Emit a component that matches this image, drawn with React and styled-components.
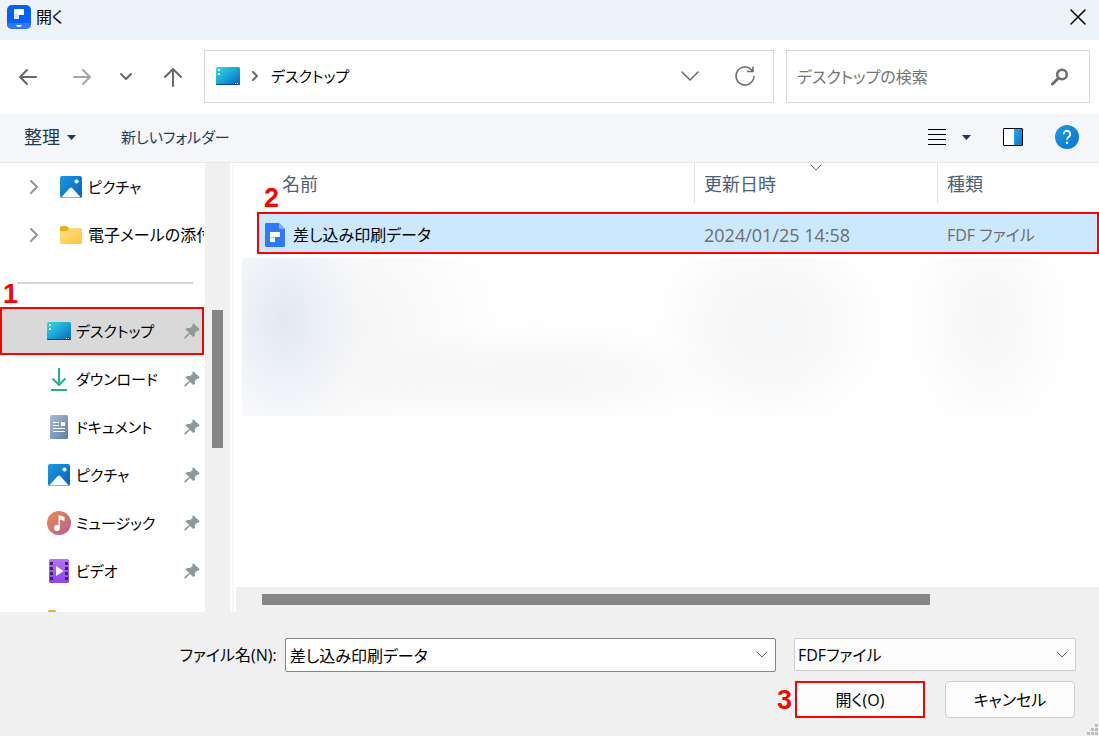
import React from "react";
import styled, { createGlobalStyle } from "styled-components";

const Global = createGlobalStyle`
  *, *::before, *::after { box-sizing: border-box; }
  body {
    margin: 0;
    font-family: "Open Sans", "Noto Sans CJK JP", sans-serif;
    font-feature-settings: "palt";
    font-size: 18px;
    line-height: 24px;
    color: #000;
    background: #f0f0f0;
  }
  button, input, select { font: inherit; font-feature-settings: inherit; color: inherit; }
  button { background: none; border: 0; padding: 0; cursor: pointer; }
  svg { display: block; flex: none; }
`;

const Dialog = styled.div`
  display: flex;
  flex-direction: column;
  height: 100vh;
  overflow: hidden;
`;

const TitleBar = styled.header`
  display: flex;
  align-items: center;
  gap: 5px;
  height: 40px;
  padding: 0 13px 6px 7px;
  background: #eef3f8;
`;

const Title = styled.h1`
  flex: 1;
  margin: 0;
  font-size: 16px;
  font-weight: 400;
`;

const IconButton = styled.button`
  display: flex;
  align-items: center;
  justify-content: center;
  flex: none;
  width: ${(p) => p.$w || 20}px;
  height: 24px;
`;

const NavBar = styled.div`
  display: flex;
  height: 74px;
  padding: 10px 9px 11px 0;
  background: #fff;
`;

const History = styled.nav`
  display: flex;
  align-items: center;
  width: 204px;
  flex: none;
`;

const Field = styled.div`
  display: flex;
  align-items: center;
  border: 1px solid #d9d9d9;
  background: #fff;
  min-width: 0;
`;

const Address = styled(Field)`
  flex: 1;
  margin-right: 12px;
  padding: 0 18px 2px 11px;
`;

const Crumb = styled.span`
  flex: 1;
  margin-left: 2px;
  font-size: 15px;
`;

const Search = styled(Field)`
  flex: 0 1 304px;
  padding: 0 20px 0 10px;
`;

const SearchInput = styled.input`
  flex: 1;
  min-width: 0;
  border: 0;
  padding: 0;
  outline: 0;
  font-size: 16px;
  background: none;
  &::placeholder { color: #757575; opacity: 1; }
`;

const Toolbar = styled.div`
  display: flex;
  align-items: center;
  gap: 45px;
  height: 49px;
  padding: 0 20px 2px 24px;
  background: #f4f6f9;
  border-bottom: 1px solid #e6e8ea;
  color: #1e395b;
`;

const ToolButton = styled.button`
  display: flex;
  align-items: center;
  gap: ${(p) => p.$gap || 7}px;
  font-size: ${(p) => p.$size || 18}px;
`;

const ToolGroup = styled.div`
  display: flex;
  align-items: center;
  gap: 32px;
  margin-left: auto;
`;

const Body = styled.div`
  display: flex;
  flex: 1;
  min-height: 0;
  background: #fff;
`;

const Tree = styled.nav`
  width: 205px;
  flex: none;
  overflow: hidden;
`;

const TreeList = styled.ul`
  list-style: none;
  margin: 0;
  padding: 0;
`;

const TreeItem = styled.li`
  position: relative;
  width: 204px;
`;

const TreeButton = styled.button`
  display: flex;
  align-items: center;
  width: 100%;
  height: 48px;
  padding: 0 ${(p) => (p.$nested ? 0 : 4)}px 0 ${(p) => (p.$nested ? 28 : 47)}px;
  text-align: left;
  ${(p) => p.$active && "background: #d9d9d9; box-shadow: inset 0 0 0 2px #f00;"}
`;

const TreeIcon = styled.span`
  display: flex;
  justify-content: center;
  flex: none;
  width: 24px;
  margin-left: ${(p) => (p.$nested ? 19 : 0)}px;
`;

const TreeLabel = styled.span`
  flex: 1;
  margin-left: 5px;
  font-size: ${(p) => p.$size || 15}px;
  white-space: nowrap;
  overflow: hidden;
`;

const Divider = styled.hr`
  width: 176px;
  height: 2px;
  margin: 23px 0 23px 17px;
  border: 0;
  background: #d6d6d6;
`;

const ScrollTrack = styled.div`
  flex: none;
  background: #f0f0f0;
  ${(p) => (p.$horizontal ? "height: 25px; margin-left: 2px; padding: 7px 169px 7px 26px;" : "width: 25px; padding: 147px 7px 0;")}
`;

const ScrollThumb = styled.div`
  background: #868686;
  height: ${(p) => p.$length || "100%"};
`;

const Splitter = styled.div`
  width: 4px;
  flex: none;
  border-right: 2px solid #f7f7f7;
`;

const Files = styled.main`
  display: flex;
  flex-direction: column;
  flex: 1;
  min-width: 0;
`;

const FileArea = styled.div`
  position: relative;
  flex: 1;
  min-height: 0;
  overflow: hidden;
`;

const Table = styled.table`
  display: block;
  margin-left: 23px;
  thead, tbody { display: block; }
`;

const HeadRow = styled.tr`
  display: grid;
  grid-template-columns: 437fr 243fr 162fr;
  height: 41px;
  margin-bottom: 8px;
`;

const HeadCell = styled.th`
  position: relative;
  padding: 9px 0 0 ${(p) => (p.$first ? 25 : 9)}px;
  border-left: ${(p) => (p.$first ? 0 : 1)}px solid #e0e3e6;
  font-weight: 400;
  text-align: left;
  color: #4c607a;
`;

const SortMark = styled.span`
  position: absolute;
  top: 1px;
  left: 50%;
  margin-left: -6px;
`;

const FileRow = styled.tr`
  position: relative;
  display: grid;
  grid-template-columns: 437fr 243fr 162fr;
  align-items: center;
  height: 42px;
  padding-top: 3px;
  background: #cce8ff;
  box-shadow: inset 0 0 0 2px #f00;
`;

const FileCell = styled.td`
  display: flex;
  align-items: center;
  gap: 8px;
  padding: 0 0 0 ${(p) => (p.$first ? 8 : 10)}px;
  font-size: ${(p) => p.$size || 16}px;
  color: ${(p) => (p.$first ? "#000" : "#6d6d6d")};
`;

const Redacted = styled.div`
  height: 158px;
  margin: 4px 28px 0 8px;
  background:
    radial-gradient(ellipse 75px 120px at 40px 58px, rgba(196, 211, 240, 0.35), rgba(215, 227, 248, 0.25) 50%, transparent),
    radial-gradient(ellipse 190px 150px at 60px 70px, rgba(225, 227, 230, 0.45), transparent),
    radial-gradient(ellipse 190px 50px at 290px 118px, rgba(236, 237, 238, 0.5), rgba(240, 241, 241, 0.4) 50%, transparent),
    radial-gradient(ellipse 110px 100px at 528px 68px, rgba(238, 239, 241, 0.55), rgba(241, 242, 242, 0.5) 50%, transparent),
    radial-gradient(ellipse 75px 110px at 746px 62px, rgba(238, 238, 240, 0.5), rgba(243, 244, 244, 0.45) 50%, transparent),
    #fefefe;
`;

const Footer = styled.form`
  position: relative;
  display: flex;
  flex-direction: column;
  gap: 9px;
  height: 124px;
  padding: 26px 23px 0 24px;
  background: #f0f0f0;
`;

const FooterRow = styled.div`
  display: flex;
  justify-content: flex-end;
  gap: ${(p) => p.$gap}px;
  padding-right: ${(p) => p.$inset || 0}px;
`;

const NameLabel = styled.label`
  flex: 1;
  text-align: right;
  font-size: 16px;
  line-height: 34px;
  margin-right: -10px;
  white-space: nowrap;
`;

const Combo = styled.div`
  position: relative;
  flex: none;
  width: ${(p) => p.$width};
  height: 34px;
`;

const NameInput = styled.input`
  width: 100%;
  height: 34px;
  padding: 0 32px 0 4px;
  border: 1px solid #868686;
  border-radius: 2px;
  background: #fff;
  font-size: 16px;
`;

const TypeSelect = styled.select`
  display: block;
  appearance: none;
  width: 100%;
  height: 33px;
  padding: 0 32px 0 3px;
  border: 1px solid #cfcfcf;
  border-radius: 2px;
  background: #fdfdfd;
  font-size: 16px;
`;

const ComboArrow = styled.span`
  position: absolute;
  right: 8px;
  top: 13px;
  pointer-events: none;
`;

const PushButton = styled.button`
  width: 130px;
  height: 37px;
  font-size: 16px;
  background: #fdfdfd;
  border: ${(p) => (p.$marked ? "2px solid #f00" : "1px solid #d0d0d0")};
  border-radius: ${(p) => (p.$marked ? 0 : 4)}px;
`;

const Marked = styled.div`
  position: relative;
  display: flex;
`;

const StepNumber = styled.span`
  position: absolute;
  left: ${(p) => p.$left}px;
  top: ${(p) => p.$top}px;
  z-index: 1;
  font: bold 27px/28px "Liberation Sans", Arial, sans-serif;
  color: #f00;
  text-shadow: 0 0 2px #fff, 1px 1px 1px #fff, -1px -1px 1px #fff, 2px 0 2px #fff, -2px 0 2px #fff, 0 2px 2px #fff;
`;

const Grip = styled.svg`
  position: absolute;
  right: 0;
  bottom: 0;
`;

const Stroke = ({ w, h, d, color = "#686868", sw = 2 }) => (
  <svg width={w} height={h} viewBox={`0 0 ${w} ${h}`} fill="none" stroke={color} strokeWidth={sw} aria-hidden="true">
    <path d={d} strokeLinecap="round" strokeLinejoin="round" />
  </svg>
);

const Caret = () => (
  <svg width="9" height="5" viewBox="0 0 9 5" aria-hidden="true"><path d="M0 0h9L4.500 5z" fill="#1e395b" /></svg>
);

const AppLogo = () => (
  <svg width="24" height="24" viewBox="0 0 24 24" aria-hidden="true">
    <rect width="24" height="24" rx="5" fill="#0560fd" />
    <path d="M0 18h24v1a5 5 0 0 1-5 5H5a5 5 0 0 1-5-5z" fill="#2b7bff" />
    <path d="M7 4h10v6h-5v4H7z" fill="#fff" />
    <path d="M7 9h5v5H7z" fill="#dbe8ff" />
    <path d="M9 20h6q-.5 2-3 2t-3-2z" fill="#fff" />
  </svg>
);

const DesktopIcon = () => (
  <svg width="24" height="18" viewBox="0 0 24 18" aria-hidden="true">
    <defs>
      <linearGradient id="desk" x1="0" y1="0" x2="1" y2="1">
        <stop offset="0" stopColor="#34dbe8" /><stop offset=".5" stopColor="#1ba4d6" /><stop offset="1" stopColor="#0b62bd" />
      </linearGradient>
    </defs>
    <rect width="24" height="18" rx="1.500" fill="url(#desk)" />
    <path d="M0 17h24a1 1 0 0 1-1 1H1a1 1 0 0 1-1-1z" fill="#0a4a86" />
    <path d="M2 2h2v2H2zM2 6h2v2H2zM19 16h1v1h-1zM21 16h1v1h-1z" fill="#fff" />
  </svg>
);

const PictureIcon = () => (
  <svg width="22" height="22" viewBox="0 0 22 22" aria-hidden="true">
    <defs>
      <linearGradient id="pic" x1="0" y1="0" x2="1" y2="1">
        <stop offset="0" stopColor="#1a9be6" /><stop offset="1" stopColor="#0660b4" />
      </linearGradient>
    </defs>
    <rect width="22" height="22" rx="2" fill="url(#pic)" />
    <path d="M1.500 21 9.800 12q1.200-1.200 2.400 0l8.300 9q-.5.500-1.500.5H3q-1 0-1.500-.5z" fill="#f4f9ff" />
    <circle cx="16.500" cy="5.500" r="2.100" fill="#fff" />
  </svg>
);

const FolderIcon = () => (
  <svg width="22" height="18" viewBox="0 0 22 18" aria-hidden="true">
    <defs>
      <linearGradient id="fold" x1="0" y1="0" x2="1" y2="1">
        <stop offset="0" stopColor="#ffdf86" /><stop offset="1" stopColor="#fcc63c" />
      </linearGradient>
    </defs>
    <path d="M0 1.500Q0 0 1.500 0H6q1 0 1.500.8L9 2.500h11.500Q22 2.500 22 4v4H0z" fill="#f1ae1c" />
    <path d="M0 5h7l2-2h11.500Q22 3 22 4.500v12q0 1.500-1.500 1.500h-19Q0 18 0 16.500z" fill="url(#fold)" />
  </svg>
);

const DownloadIcon = () => (
  <svg width="18" height="24" viewBox="0 0 18 24" fill="none" stroke="#22b193" strokeWidth="2" aria-hidden="true">
    <path d="M9 1v17M2.500 11.500 9 18l6.500-6.500M1 23h16" />
  </svg>
);

const DocumentIcon = () => (
  <svg width="18" height="24" viewBox="0 0 18 24" aria-hidden="true">
    <defs>
      <linearGradient id="doc" x1="0" y1="0" x2="1" y2="1">
        <stop offset="0" stopColor="#a9bfd6" /><stop offset="1" stopColor="#5b7da3" />
      </linearGradient>
    </defs>
    <rect width="18" height="24" rx="1.500" fill="url(#doc)" />
    <path d="M3 7.500h6M3 10.500h6M3 13.500h12M3 16.500h12" stroke="#fff" />
    <path d="M11 7h4v4h-4z" fill="#fff" />
  </svg>
);

const MusicIcon = () => (
  <svg width="24" height="24" viewBox="0 0 24 24" aria-hidden="true">
    <defs>
      <linearGradient id="mus" x1="0" y1="0" x2="1" y2="1">
        <stop offset="0" stopColor="#f08a55" /><stop offset=".5" stopColor="#d3746c" /><stop offset="1" stopColor="#a8619f" />
      </linearGradient>
    </defs>
    <circle cx="12" cy="12" r="12" fill="url(#mus)" />
    <circle cx="10" cy="17" r="3" fill="#fff" />
    <path d="M11.500 17V4l6 2v4l-4.500-1.500V17z" fill="#fff" />
  </svg>
);

const VideoIcon = () => (
  <svg width="20" height="24" viewBox="0 0 20 24" aria-hidden="true">
    <defs>
      <linearGradient id="vid" x1="0" y1="0" x2="0" y2="1">
        <stop offset="0" stopColor="#b374f5" /><stop offset="1" stopColor="#8b46e8" />
      </linearGradient>
    </defs>
    <rect width="20" height="24" rx="1.500" fill="url(#vid)" />
    <path d="M1 3h3v3H1zM1 8h3v3H1zM1 13h3v3H1zM1 18h3v3H1zM16 3h3v3h-3zM16 8h3v3h-3zM16 13h3v3h-3zM16 18h3v3h-3z" fill="#43207a" />
    <path d="M7 7v10l7.500-5z" fill="#fff" />
  </svg>
);

const PinIcon = () => (
  <svg width="16" height="16" viewBox="0 0 16 16" aria-hidden="true">
    <path d="M9.500 .5 15.500 6 15 7.500 13 7.800 10.800 10.200 11 12.500 9.500 14.300 6 11 1.200 15.700 0.200 15 0.500 14 5 9.800 1.500 6.500 3 5 6 5 8.500 3 8.300 1z" fill="#8f9a9f" />
  </svg>
);

const FileIcon = () => (
  <svg width="20" height="24" viewBox="0 0 20 24" aria-hidden="true">
    <path d="M1 0h13l6 6v17q0 1-1 1H1q-1 0-1-1V1q0-1 1-1z" fill="#2f7af5" />
    <path d="M14 0l6 6h-4.500Q14 6 14 4.500z" fill="#7fb0ff" />
    <path d="M5 9h10v5h-5v5H5z" fill="#fff" />
    <path d="M5 14h5v1H5z" fill="#a9c8ff" />
  </svg>
);

const SearchIcon = () => (
  <svg width="18" height="18" viewBox="0 0 18 18" fill="none" stroke="#707070" aria-hidden="true">
    <circle cx="11" cy="6.500" r="4.800" strokeWidth="2.600" />
    <path d="M7.500 10 1.500 16" strokeWidth="3" strokeLinecap="round" />
  </svg>
);

const RefreshIcon = () => (
  <svg width="20" height="20" viewBox="0 0 20 20" fill="none" stroke="#6a6a6a" strokeWidth="1.500" aria-hidden="true">
    <path d="M17.500 5A9 9 0 1 0 19 10M18 .5v5h-6" />
  </svg>
);

const ListIcon = () => (
  <svg width="18" height="17" viewBox="0 0 18 17" stroke="#000" aria-hidden="true">
    <path d="M0 .5h18M0 5.500h18M0 10.500h18M0 15.500h18" />
  </svg>
);

const PaneIcon = () => (
  <svg width="20" height="18" viewBox="0 0 20 18" aria-hidden="true">
    <defs>
      <linearGradient id="pane" x1="0" y1="0" x2="1" y2="1">
        <stop offset="0" stopColor="#27a8ea" /><stop offset="1" stopColor="#0a78d0" />
      </linearGradient>
    </defs>
    <rect x=".5" y=".5" width="19" height="17" rx=".5" fill="#fff" stroke="#000" />
    <path d="M11 1h8v16h-8z" fill="url(#pane)" />
  </svg>
);

const HelpIcon = () => (
  <svg width="24" height="24" viewBox="0 0 24 24" fill="none" aria-hidden="true">
    <defs>
      <linearGradient id="help" x1="0" y1="0" x2="1" y2="1">
        <stop offset="0" stopColor="#1f9ce6" /><stop offset="1" stopColor="#0674cf" />
      </linearGradient>
    </defs>
    <circle cx="12" cy="12" r="12" fill="url(#help)" />
    <path d="M8.800 9.200a3.200 3.200 0 1 1 5.200 2.300q-2 1.400-2 3.200" stroke="#fff" strokeWidth="1.800" />
    <circle cx="12" cy="17.800" r="1.200" fill="#fff" />
  </svg>
);

const expandable = [
  { label: "ピクチャ", Icon: PictureIcon },
  { label: "電子メールの添付", Icon: FolderIcon, size: 16 },
];

const pinned = [
  { label: "デスクトップ", Icon: DesktopIcon, active: true },
  { label: "ダウンロード", Icon: DownloadIcon },
  { label: "ドキュメント", Icon: DocumentIcon },
  { label: "ピクチャ", Icon: PictureIcon },
  { label: "ミュージック", Icon: MusicIcon },
  { label: "ビデオ", Icon: VideoIcon },
];

const DownChevron = () => <Stroke w={12} h={8} d="M1 1l5 5 5-5" sw={1} />;

export default function App() {
  return (
    <>
      <Global />
      <Dialog role="dialog" aria-labelledby="title">
        <TitleBar>
          <AppLogo />
          <Title id="title">開く</Title>
          <IconButton $w={17} aria-label="閉じる">
            <Stroke w={16} h={16} d="M1 1l14 14M15 1 1 15" color="#000" sw={1.5} />
          </IconButton>
        </TitleBar>

        <NavBar>
          <History>
            <IconButton $w={56} aria-label="戻る"><Stroke w={20} h={18} d="M18 9H2M9 2 2 9l7 7" /></IconButton>
            <IconButton $w={52} aria-label="進む"><Stroke w={20} h={18} d="M2 9h16M11 2l7 7-7 7" color="#a6a6a6" /></IconButton>
            <IconButton $w={36} aria-label="履歴"><Stroke w={14} h={10} d="M2 2l5 5 5-5" /></IconButton>
            <IconButton $w={58} aria-label="上へ"><Stroke w={20} h={20} d="M10 19V2M2 10l8-8 8 8" /></IconButton>
          </History>
          <Address>
            <DesktopIcon />
            <IconButton $w={29} aria-label="展開"><Stroke w={8} h={10} d="M2 1l4 4-4 4" /></IconButton>
            <Crumb>デスクトップ</Crumb>
            <IconButton $w={90} aria-label="以前の場所"><Stroke w={18} h={12} d="M1 2l8 8 8-8" sw={1.5} /></IconButton>
            <IconButton aria-label="更新"><RefreshIcon /></IconButton>
          </Address>
          <Search>
            <SearchInput type="search" aria-label="検索" placeholder="デスクトップの検索" />
            <SearchIcon />
          </Search>
        </NavBar>

        <Toolbar>
          <ToolButton>整理<Caret /></ToolButton>
          <ToolButton $size={15}>新しいフォルダー</ToolButton>
          <ToolGroup>
            <ToolButton $gap={16} aria-label="表示"><ListIcon /><Caret /></ToolButton>
            <IconButton aria-label="プレビュー"><PaneIcon /></IconButton>
            <IconButton $w={24} aria-label="ヘルプ"><HelpIcon /></IconButton>
          </ToolGroup>
        </Toolbar>

        <Body>
          <Tree aria-label="フォルダー">
            <TreeList>
              {expandable.map(({ label, Icon, size }) => (
                <TreeItem key={label}>
                  <TreeButton $nested>
                    <Stroke w={12} h={14} d="M3 1l6 6-6 6" color="#969696" />
                    <TreeIcon $nested><Icon /></TreeIcon>
                    <TreeLabel $size={size}>{label}</TreeLabel>
                  </TreeButton>
                </TreeItem>
              ))}
            </TreeList>
            <Divider />
            <TreeList>
              {pinned.map(({ label, Icon, active }) => (
                <TreeItem key={label}>
                  {active && <StepNumber $left={3} $top={-27}>1</StepNumber>}
                  <TreeButton $active={active}>
                    <TreeIcon><Icon /></TreeIcon>
                    <TreeLabel>{label}</TreeLabel>
                    <PinIcon />
                  </TreeButton>
                </TreeItem>
              ))}
              <TreeItem>
                <TreeButton aria-label="フォルダー">
                  <TreeIcon><FolderIcon /></TreeIcon>
                </TreeButton>
              </TreeItem>
            </TreeList>
          </Tree>
          <ScrollTrack><ScrollThumb $length="138px" /></ScrollTrack>
          <Splitter />
          <Files>
            <FileArea>
              <Table>
                <thead>
                  <HeadRow>
                    <HeadCell $first>名前</HeadCell>
                    <HeadCell>
                      更新日時
                      <SortMark><DownChevron /></SortMark>
                    </HeadCell>
                    <HeadCell>種類</HeadCell>
                  </HeadRow>
                </thead>
                <tbody>
                  <FileRow>
                    <FileCell $first>
                      <StepNumber $left={7} $top={-28}>2</StepNumber>
                      <FileIcon />
                      差し込み印刷データ
                    </FileCell>
                    <FileCell $size={18}>2024/01/25 14:58</FileCell>
                    <FileCell>FDF ファイル</FileCell>
                  </FileRow>
                </tbody>
              </Table>
              <Redacted />
            </FileArea>
            <ScrollTrack $horizontal><ScrollThumb /></ScrollTrack>
          </Files>
        </Body>

        <Footer onSubmit={(e) => e.preventDefault()}>
          <FooterRow $gap={18}>
            <NameLabel htmlFor="filename">ファイル名(N):</NameLabel>
            <Combo $width="46.7%">
              <NameInput id="filename" defaultValue="差し込み印刷データ" />
              <ComboArrow><DownChevron /></ComboArrow>
            </Combo>
            <Combo $width="282px">
              <TypeSelect aria-label="ファイルの種類" defaultValue="fdf">
                <option value="fdf">FDFファイル</option>
              </TypeSelect>
              <ComboArrow><DownChevron /></ComboArrow>
            </Combo>
          </FooterRow>
          <FooterRow $gap={20} $inset={1}>
            <Marked>
              <StepNumber $left={-18} $top={5}>3</StepNumber>
              <PushButton $marked type="submit">開く(O)</PushButton>
            </Marked>
            <PushButton type="button">キャンセル</PushButton>
          </FooterRow>
          <Grip width="12" height="12" viewBox="0 0 12 12" aria-hidden="true">
            <path d="M8 0h3v3H8zM4 4h3v3H4zM8 4h3v3H8zM0 8h3v3H0zM4 8h3v3H4zM8 8h3v3H8z" fill="#bdbdbd" />
          </Grip>
        </Footer>
      </Dialog>
    </>
  );
}
